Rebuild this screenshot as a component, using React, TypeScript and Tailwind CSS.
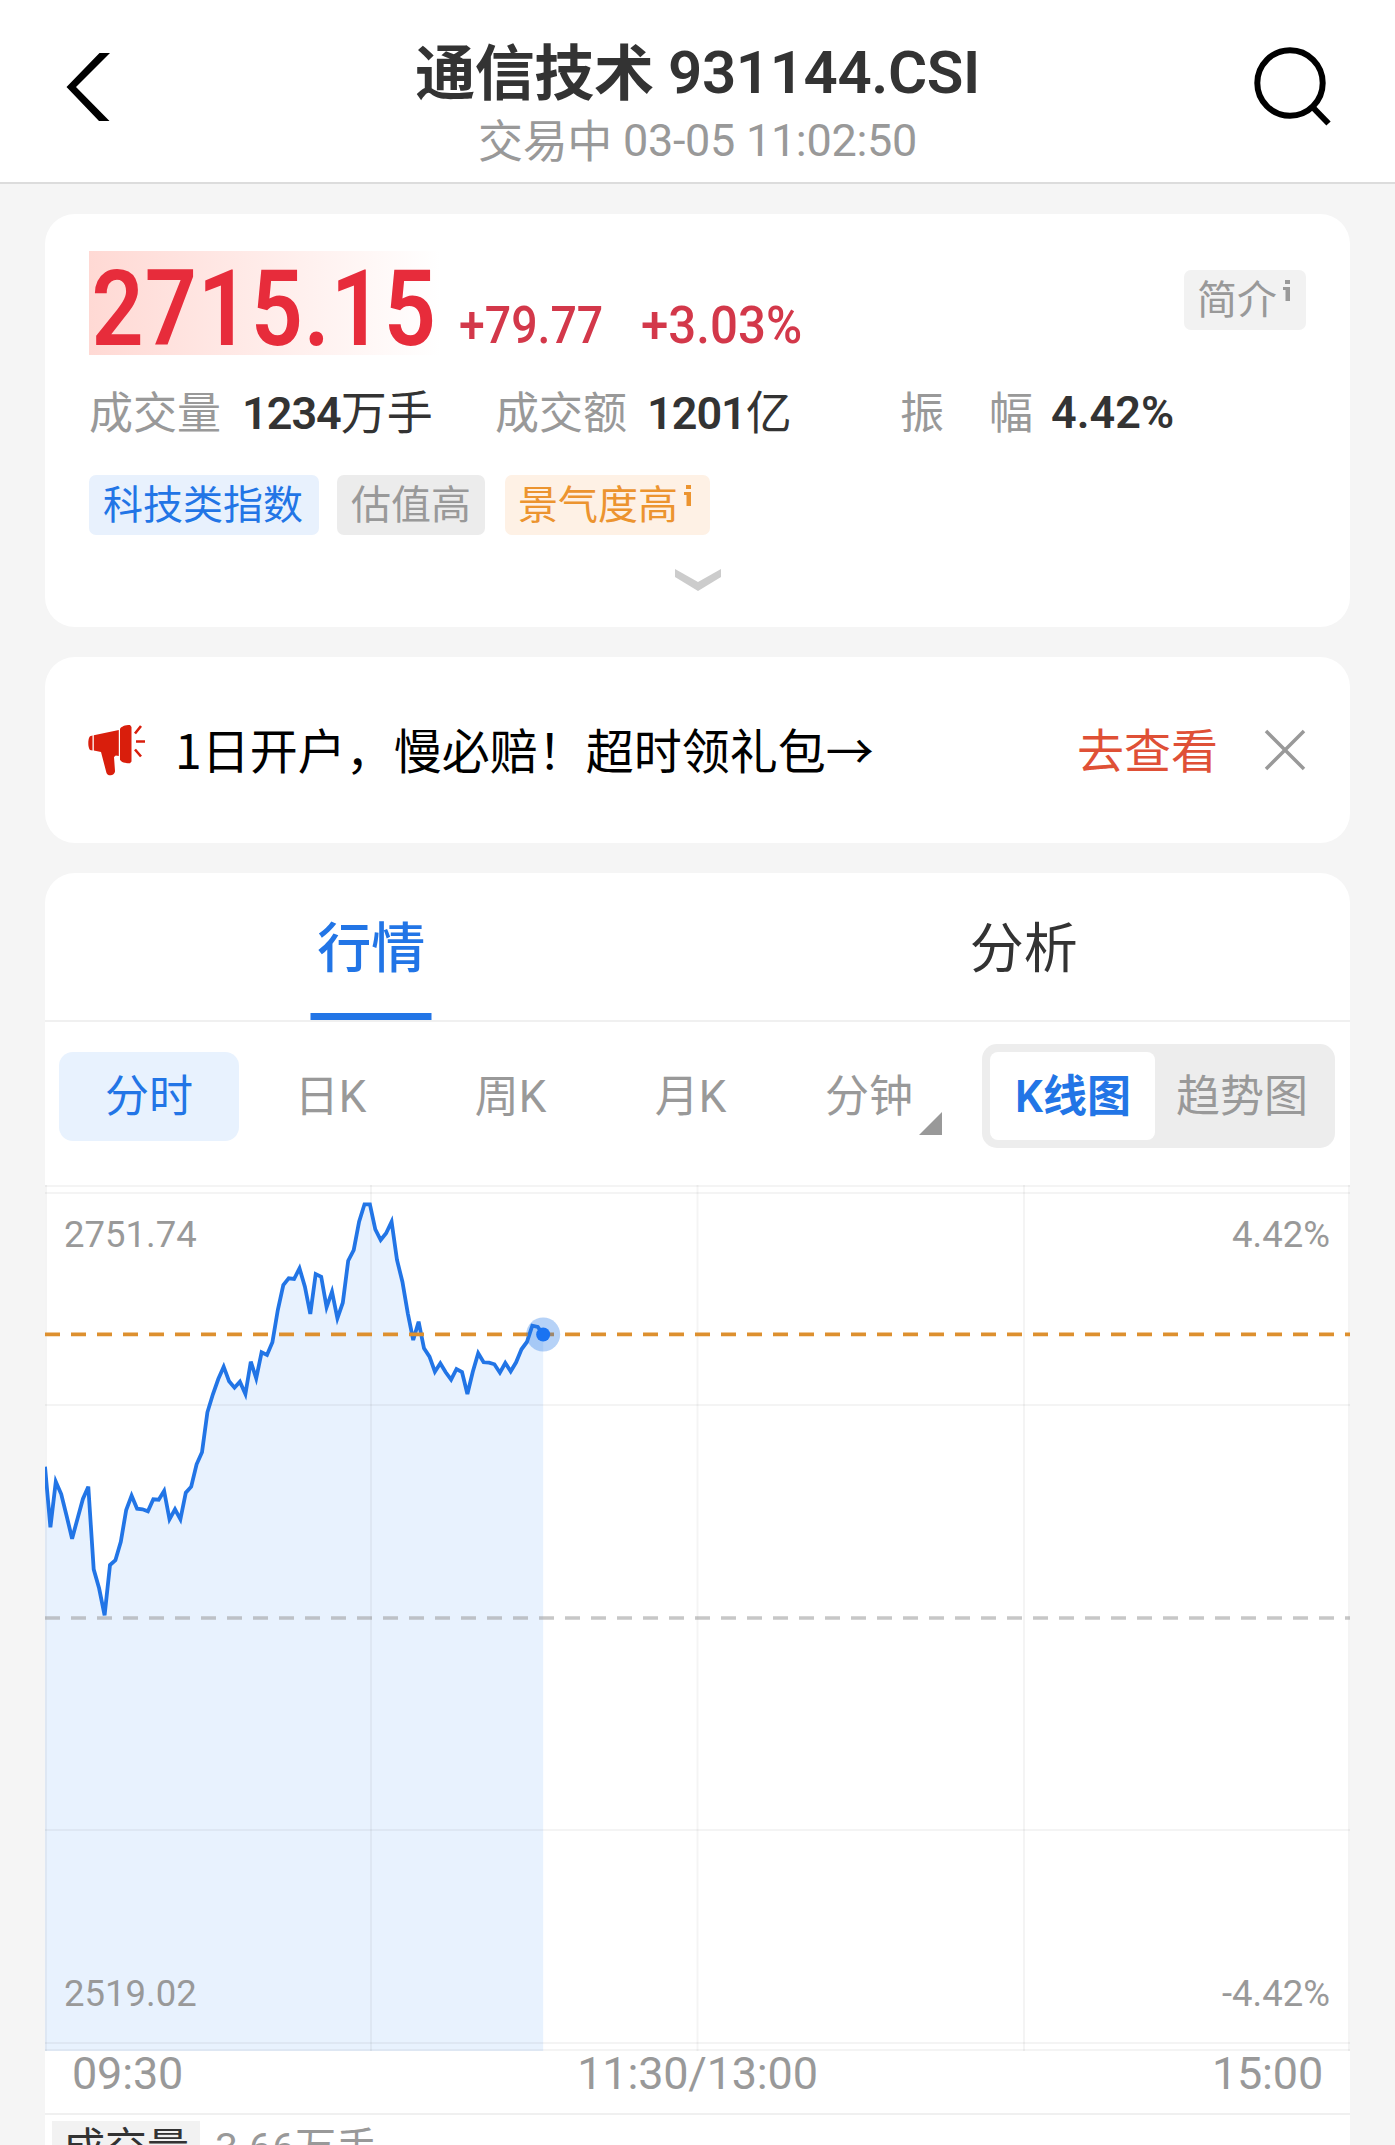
import type { ReactNode } from "react";
import clsx from "clsx";

const periods = ["分时", "日K", "周K", "月K", "分钟"];

// one sample per minute from 09:30, in chart pixels from the top
const series = [
  281.7, 342.3, 296.7, 309, 331.3, 353.7, 333.7, 314, 301.7, 384.3, 403.3, 430.3,
  380, 375.3, 356.7, 325, 310.7, 323.7, 324.3, 326.3, 314.3, 314.7, 306, 334.3,
  324.3, 334.3, 307.7, 301.7, 279.3, 267.3, 227.3, 209.3, 194, 181.7, 196.3, 202.7,
  196.7, 209, 176.7, 193.3, 167.3, 170, 157.3, 125, 100, 93.3, 94, 83.3,
  101.7, 129, 89, 91.7, 122.3, 106.7, 133.3, 117.7, 75.7, 65, 36.7, 19.3,
  19.3, 44.3, 55, 48.3, 36.7, 75, 96.7, 128.3, 155, 136.7, 163.3, 171.7,
  186.7, 178.3, 187.3, 194.7, 184, 187, 209, 186.7, 168.3, 177.3, 177.7, 179.3,
  187.7, 178, 186.3, 177.3, 164.3, 157, 140.7, 142, 149.5,
];

const STEP = 1305 / 241;
const CHART_H = 866;
const points = series.map((y, i) => `${(i * STEP).toFixed(1)},${y}`).join(" ");
const lastX = (series.length - 1) * STEP;

function Header() {
  return (
    <header className="grid h-[184px] grid-cols-[200px_1fr_200px] items-start border-b-2 border-[#dcdcdc] bg-white">
      <button aria-label="返回" className="ml-[66px] mt-[53px] justify-self-start">
        <svg width="45" height="68" viewBox="0 0 45 68">
          <path d="M44 0H33.500L.5 34 33 68h10.500L10 34z" fill="#000" />
        </svg>
      </button>
      <div className="pt-[38px] text-center">
        <h1 className="text-[60px] font-semibold leading-[70px] tracking-[-0.4px] text-[#333]">
          <span className="relative top-[2px]">通信技术</span> 931144.CSI
        </h1>
        <p className="mt-[3px] text-[45px] leading-[60px] tracking-[-0.3px] text-[#999]">
          <span className="relative top-[2px]">交易中</span> 03-05 11:02:50
        </p>
      </div>
      <button aria-label="搜索" className="mr-[62px] mt-[45px] justify-self-end">
        <svg width="80" height="82" viewBox="0 0 80 82" fill="none">
          <circle cx="37" cy="38" r="32.7" stroke="#000" strokeWidth="6" />
          <path d="M58.500 61l17 17.500" stroke="#000" strokeWidth="6" />
        </svg>
      </button>
    </header>
  );
}

function InfoMark() {
  return (
    <svg width="8" height="22" viewBox="0 0 8 22" className="ml-[6px] mt-[10px]" fill="currentColor">
      <path d="M2 0h5v4H2zM0 7h7v14H2.500V10H0z" />
    </svg>
  );
}

function Tag({ className, info, children }: { className: string; info?: boolean; children: ReactNode }) {
  return (
    <span className={clsx("flex h-[60px] rounded-[7px] text-[40px] leading-[62px]", className)}>
      {children}
      {info && <InfoMark />}
    </span>
  );
}

function QuoteCard() {
  return (
    <section className="h-[413px] rounded-[30px] bg-white pl-[44px] pr-[44px] pt-[37px]">
      <div className="flex h-[104px] items-start">
        <div className="h-[104px] w-[370px] bg-linear-to-r from-[#ffd9d4] to-white to-95%">
          <span className="inline-block origin-left scale-x-[0.87] pl-[3px] text-[105px] font-semibold leading-[117px] tracking-[1px] text-[#e72c3b]">
            2715.15
          </span>
        </div>
        <span className="w-[182px] origin-left scale-x-[0.91] pt-[50px] text-[51px] font-medium leading-[50px] text-[#d3384a]">
          +79.77
        </span>
        <span className="w-[200px] origin-left scale-x-[0.965] pt-[50px] text-[51px] font-medium leading-[50px] text-[#d3384a]">
          +3.03%
        </span>
        <Tag info className="ml-auto mt-[19px] w-[122px] bg-[#f2f2f2] pl-[13px] text-[#999]">
          简介
        </Tag>
      </div>

      <div className="mt-[28px] flex h-[60px] text-[44px] leading-[60px] text-[#999]">
        <span className="w-[153px] pt-px">成交量</span>
        <span className="w-[253px] text-[46px] text-[#333]">
          <b className="text-[45px] font-semibold tracking-[-1px]">1234</b>万手
        </span>
        <span className="w-[152px] pt-px">成交额</span>
        <span className="w-[253px] text-[46px] text-[#333]">
          <b className="text-[45px] font-semibold tracking-[-1px]">1201</b>亿
        </span>
        <span className="w-[89px] pt-px">振</span>
        <span className="w-[62px] pt-px">幅</span>
        <b className="text-[45px] font-semibold text-[#333]">4.42%</b>
      </div>

      <div className="mt-[32px] flex">
        <Tag className="w-[230px] bg-[#e8f1fd] pl-[14px] text-[#2275e6]">科技类指数</Tag>
        <Tag className="ml-[18px] w-[148px] bg-[#ececec] pl-[14px] text-[#999]">估值高</Tag>
        <Tag info className="ml-[20px] w-[205px] bg-[#fef1e5] pl-[13px] text-[#ec942f]">
          景气度高
        </Tag>
      </div>

      <svg width="46" height="24" viewBox="0 0 46 24" className="mx-auto mt-[33px]">
        <path d="M0 1l23 13L46 1v8L23 23 0 9z" fill="#ccc" />
      </svg>
    </section>
  );
}

function PromoBanner() {
  return (
    <section className="mt-[30px] flex h-[186px] items-center rounded-[30px] bg-white pl-[43px] text-[48px] leading-[60px]">
      <svg width="58" height="54" viewBox="0 0 58 54" fill="#d91e0c" className="mt-[2px]">
        <path d="M4.500 11.500v15L2 26C.8 24.500.3 22 .3 19s.5-5.500 1.700-6.800z" />
        <path d="M5.800 11.200L30.800 6v26l-3-.5-1.800 1.500L27 47c0 4.500-7 6-8.500 2L13 28l-7.200-1.500z" />
        <path d="M32 5C33 2.500 37 1 42 1l1.500 2v34.500l-1.500 1.800c-5 0-9-1-10-3.800z" />
        <path d="M47 9.500l6-7.500M48 17.500h9M47 25.500l6 7" stroke="#d91e0c" strokeWidth="2.600" />
      </svg>
      <p className="mb-[5px] ml-[29px] font-['Noto_Sans_CJK_SC',sans-serif] text-black">
        1日开户，慢必赔！超时领礼包→
      </p>
      <a className="ml-auto mr-[46px] mt-[3px] text-[47px] text-[#df5036]">去查看</a>
      <svg width="42" height="42" viewBox="0 0 42 42" className="mr-[44px]">
        <path d="M2 2l38 38M40 2L2 40" stroke="#999" strokeWidth="3.500" />
      </svg>
    </section>
  );
}

function Tabs() {
  return (
    <div className="flex h-[149px] border-b-2 border-[#f0f0f0] text-[54px] leading-[153px]">
      <div className="relative flex-1 text-center font-medium text-[#2275e6]">
        行情
        <i className="absolute bottom-0 left-1/2 h-[7px] w-[121px] -translate-x-1/2 bg-[#2275e6]" />
      </div>
      <div className="flex-1 text-center text-[#333]">分析</div>
    </div>
  );
}

function Toolbar() {
  return (
    <div className="flex h-[163px] items-start pl-[14px] pt-[22px] text-[44px] text-[#999]">
      {periods.map((p, i) => (
        <button
          key={p}
          className={clsx(
            "relative mt-[8px] h-[89px] w-[180px] rounded-[14px] leading-[91px]",
            i === 0 && "bg-[#e8f2fe] text-[#2275e6]",
            i > 0 && i < 4 && "pl-[3px]"
          )}
        >
          {p}
          {p === "分钟" && (
            <svg width="23" height="23" viewBox="0 0 23 23" className="absolute bottom-[6px] right-[17px]">
              <path d="M23 0v23H0z" fill="#999" />
            </svg>
          )}
        </button>
      ))}
      <div className="ml-[23px] flex h-[104px] w-[353px] rounded-[15px] bg-[#ededed] p-[8px] leading-[91px]">
        <button className="w-[165px] rounded-[8px] bg-white pl-px font-semibold text-[#2275e6]">
          K线图
        </button>
        <button className="flex-1 pl-[2px]">趋势图</button>
      </div>
    </div>
  );
}

function Chart() {
  return (
    <div className="relative h-[866px] text-[36.5px] leading-[40px] text-[#999]">
      <svg width="1305" height={CHART_H} viewBox={`0 0 1305 ${CHART_H}`} fill="none">
        <polygon points={`0,${CHART_H} ${points} ${lastX},${CHART_H}`} fill="#e8f2fe" />
        <g stroke="#000" strokeOpacity="0.045" strokeWidth="2">
          <path d="M0 1h1305M0 8h1305M0 220h1305M0 645h1305M0 858h1305M0 865h1305" />
          <path d="M1 0v866M326 0v866M652.500 0v866M979 0v866M1304 0v866" />
        </g>
        <path d="M0 433h1305" stroke="#999" strokeOpacity="0.55" strokeWidth="3.500" strokeDasharray="15 11" />
        <polyline points={points} stroke="#2275e6" strokeWidth="3.800" />
        <path d="M0 149.300h1305" stroke="#dd902f" strokeWidth="3.700" strokeDasharray="15 11" />
        <circle cx={lastX} cy="149.500" r="17" fill="#2275e6" fillOpacity="0.33" />
        <circle cx={lastX} cy="149.500" r="7" fill="#1a73f2" />
      </svg>
      <span className="absolute left-[19px] top-[30px]">2751.74</span>
      <span className="absolute right-[20px] top-[30px]">4.42%</span>
      <span className="absolute bottom-[37px] left-[19px]">2519.02</span>
      <span className="absolute bottom-[37px] right-[20px]">-4.42%</span>
    </div>
  );
}

export default function App() {
  return (
    <div className="h-[2145px] w-[1395px] overflow-hidden bg-[#f5f5f5] font-['Roboto','Noto_Sans_CJK_SC',sans-serif]">
      <Header />
      <main className="mx-[45px] mt-[30px]">
        <QuoteCard />
        <PromoBanner />
        <section className="mt-[30px] h-[1300px] rounded-t-[30px] bg-white">
          <Tabs />
          <Toolbar />
          <Chart />
          <div className="grid h-[64px] grid-cols-3 border-b-2 border-[#f0f0f0] px-[27px] text-[45px] leading-[45px] tracking-[-0.2px] text-[#999]">
            <span>09:30</span>
            <span className="text-center">11:30/13:00</span>
            <span className="text-right">15:00</span>
          </div>
          <div className="flex pl-[7px] pt-[6px] text-[42px] leading-[55px]">
            <span className="w-[148px] bg-[#f2f2f2] text-center text-[#333]">成交量</span>
            <span className="ml-[15px] text-[41px] text-[#999]">3.66万手</span>
          </div>
        </section>
      </main>
    </div>
  );
}
